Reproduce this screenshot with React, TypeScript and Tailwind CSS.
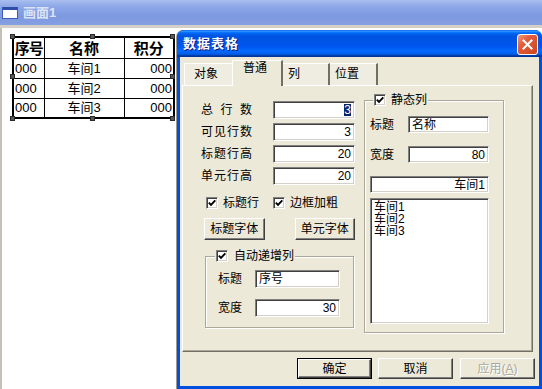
import React from "react";

function Check() {
  return (
    <span className="w-[12px] h-[12px] shrink-0 bg-white border border-t-[#808080] border-l-[#808080] border-b-white border-r-white shadow-[inset_1px_1px_0_#404040,inset_-1px_-1px_0_#d4d0c8] flex items-center justify-center">
      <svg width="8" height="8" viewBox="0 0 8 8">
        <path d="M0.8 3.6 L3 5.9 L7.3 1.4" stroke="#000" strokeWidth="1.9" fill="none" />
      </svg>
    </span>
  );
}

function Field({ className, value, left, selected }: { className: string; value?: string; left?: boolean; selected?: boolean }) {
  return (
    <div
      className={
        "bg-white border border-t-[#808080] border-l-[#808080] border-b-white border-r-white shadow-[inset_1px_1px_0_#404040,inset_-1px_-1px_0_#d4d0c8] flex items-center px-[3px] text-[12px] leading-[12px] text-black " +
        (left ? "justify-start " : "justify-end ") +
        className
      }
    >
      {selected ? <span className="bg-[#0a246a] text-white px-[0px]">{value}</span> : value}
    </div>
  );
}

function Btn({ children, className }: { children: React.ReactNode; className: string }) {
  return (
    <div
      className={
        "flex items-center justify-center bg-[#ece9d8] border border-t-white border-l-white border-b-[#404040] border-r-[#404040] shadow-[inset_-1px_-1px_0_#808080] text-[12px] leading-[12px] " +
        className
      }
    >
      {children}
    </div>
  );
}

function Handle({ className }: { className: string }) {
  return <div className={"absolute w-[5px] h-[5px] bg-[#5a5a5a] border border-[#2a2a2a] " + className} />;
}

export default function App() {
  return (
    <div className="relative w-[542px] h-[389px] overflow-hidden bg-white flex flex-col font-['Liberation_Sans','Noto_Sans_CJK_SC',sans-serif] text-black">
      {/* outer window title bar */}
      <div className="h-[25px] shrink-0 flex items-center bg-[linear-gradient(to_bottom,#aabef0_0%,#8ea8e8_25%,#7c98df_65%,#87a0e2_100%)]">
        <div className="ml-[2px] w-[16px] h-[12px] bg-white border border-[#3b5fb8] border-t-[3px] border-t-[#2d4fa8]" />
        <span className="ml-[5px] text-[13px] leading-[13px] font-bold text-[#dbe3f7]">画面1</span>
      </div>
      <div className="h-[3px] shrink-0 bg-[#d4d0c8]" />
      {/* canvas */}
      <div className="flex-1 border-l-[2px] border-[#c4c1b4] pl-[10px] pt-[8px]">
        <div className="relative w-[161px]">
          <table className="table-fixed border-collapse w-[161px] border-2 border-black">
            <colgroup>
              <col className="w-[31px]" />
              <col className="w-[80px]" />
              <col className="w-[50px]" />
            </colgroup>
            <tbody>
              <tr className="h-[21px]">
                <td className="border border-black p-0 text-center text-[15px] leading-[15px] font-bold font-['Noto_Sans_CJK_SC',sans-serif] whitespace-nowrap tracking-[-1px]">序号</td>
                <td className="border border-black p-0 text-center text-[15px] leading-[15px] font-bold font-['Noto_Sans_CJK_SC',sans-serif]">名称</td>
                <td className="border border-black p-0 text-center text-[15px] leading-[15px] font-bold font-['Noto_Sans_CJK_SC',sans-serif]">积分</td>
              </tr>
              {["车间1", "车间2", "车间3"].map((n) => (
                <tr key={n} className="h-[20px]">
                  <td className="border border-black p-0 pl-[1px] text-left text-[13px] leading-[13px]">000</td>
                  <td className="border border-black p-0 text-center text-[13px] leading-[13px]">{n}</td>
                  <td className="border border-black p-0 pr-[1px] text-right text-[13px] leading-[13px]">000</td>
                </tr>
              ))}
            </tbody>
          </table>
          <Handle className="left-[-2px] top-[-2px]" />
          <Handle className="left-[78px] top-[-2px]" />
          <Handle className="right-[-2px] top-[-2px]" />
          <Handle className="left-[-2px] top-[38px]" />
          <Handle className="right-[-2px] top-[38px]" />
          <Handle className="left-[-2px] bottom-[-2px]" />
          <Handle className="left-[78px] bottom-[-2px]" />
          <Handle className="right-[-2px] bottom-[-2px]" />
        </div>
      </div>

      {/* dialog window */}
      <div className="absolute left-[177px] top-[30px] w-[365px] h-[359px] flex flex-col rounded-t-[7px] bg-[#0050e0] shadow-[-1px_0_0_#9c9a90]">
        <div className="h-[27px] shrink-0 flex items-center justify-between pl-[6px] pr-[4px] rounded-t-[7px] bg-[linear-gradient(to_bottom,#0058ee_0%,#3593ff_4%,#288eff_6%,#127dff_8%,#036ffc_10%,#0262ee_14%,#0057e5_20%,#0054e3_24%,#0055eb_56%,#005bf5_66%,#026afe_76%,#0062ef_86%,#0052d6_92%,#0040ab_94%,#003092_100%)]">
          <span className="text-[13px] leading-[13px] font-bold text-white tracking-[1px] [text-shadow:1px_1px_0_#0a1883]">数据表格</span>
          <div className="w-[21px] h-[21px] mt-[2px] rounded-[3px] border border-white bg-[linear-gradient(to_bottom_right,#f09b7e_0%,#e35d3c_35%,#cc4620_100%)] flex items-center justify-center">
            <svg width="11" height="11" viewBox="0 0 11 11">
              <path d="M1.5 1.5 L9.5 9.5 M9.5 1.5 L1.5 9.5" stroke="#fff" strokeWidth="2" strokeLinecap="square" />
            </svg>
          </div>
        </div>
        <div className="mx-[3px] mb-[3px] flex-1 bg-[#ece9d8] flex flex-col text-[12px] leading-[12px]">
          {/* tabs */}
          <div className="pt-[3px] h-[28px] shrink-0 flex items-end pl-[4px] relative z-10">
            <div className="w-[48px] h-[22px] pl-[9px] pt-[4px] bg-[#efede2] border-t border-l border-white">对象</div>
            <div className="w-[51px] h-[26px] -mb-[1px] pl-[10px] pt-[1px] bg-[#ece9d8] border-t border-l border-white border-r-2 border-r-[#716f64]">普通</div>
            <div className="w-[47px] h-[22px] pl-[5px] pt-[4px] bg-[#efede2] border-t border-white border-r-2 border-r-[#716f64]">列</div>
            <div className="w-[48px] h-[22px] pl-[5px] pt-[4px] bg-[#efede2] border-t border-white border-r-2 border-r-[#716f64]">位置</div>
          </div>
          {/* panel */}
          <div className="ml-[2px] w-[351px] h-[267px] shrink-0 border border-t-white border-l-white border-r-[#716f64] border-b-[#716f64] shadow-[inset_-1px_-1px_0_#aca899] flex">
            {/* left column */}
            <div className="ml-[18px] w-[154px] flex flex-col">
              <div className="mt-[15px] flex flex-col gap-[4px]">
                <div className="h-[18px] flex items-center justify-between">
                  <div className="w-[51px] flex justify-between">
                    <span>总</span>
                    <span>行</span>
                    <span>数</span>
                  </div>
                  <Field className="w-[82px] h-[18px]" value="3" selected />
                </div>
                <div className="h-[18px] flex items-center justify-between">
                  <span className="tracking-[1px]">可见行数</span>
                  <Field className="w-[82px] h-[18px]" value="3" />
                </div>
                <div className="h-[18px] flex items-center justify-between">
                  <span className="tracking-[1px]">标题行高</span>
                  <Field className="w-[82px] h-[18px]" value="20" />
                </div>
                <div className="h-[18px] flex items-center justify-between">
                  <span className="tracking-[1px]">单元行高</span>
                  <Field className="w-[82px] h-[18px]" value="20" />
                </div>
              </div>
              <div className="mt-[12px] h-[12px] pl-[5px] flex items-center">
                <div className="w-[67px] flex items-center gap-[5px]">
                  <Check />
                  <span>标题行</span>
                </div>
                <div className="flex items-center gap-[5px]">
                  <Check />
                  <span>边框加粗</span>
                </div>
              </div>
              <div className="mt-[9px] pl-[3px] flex gap-[30px]">
                <Btn className="w-[61px] h-[22px]">标题字体</Btn>
                <Btn className="w-[61px] h-[22px]">单元字体</Btn>
              </div>
              <div className="mt-[16px] ml-[4px] w-[149px] h-[72px] relative border border-[#aca899] shadow-[1px_1px_0_#fff,inset_1px_1px_0_#fff] flex flex-col pl-[12px]">
                <div className="absolute left-[9px] top-[-7px] px-[1px] bg-[#ece9d8] flex items-center gap-[6px]">
                  <Check />
                  <span>自动递增列</span>
                </div>
                <div className="mt-[13px] h-[18px] flex items-center">
                  <span className="w-[37px]">标题</span>
                  <Field className="w-[85px] h-[18px]" value="序号" left />
                </div>
                <div className="mt-[11px] h-[18px] flex items-center">
                  <span className="w-[37px]">宽度</span>
                  <Field className="w-[85px] h-[18px]" value="30" />
                </div>
              </div>
            </div>
            {/* right group */}
            <div className="ml-[9px] mt-[14px] w-[140px] h-[233px] relative border border-[#aca899] shadow-[1px_1px_0_#fff,inset_1px_1px_0_#fff] flex flex-col pl-[5px]">
              <div className="absolute left-[8px] top-[-7px] px-[1px] bg-[#ece9d8] flex items-center gap-[5px]">
                <Check />
                <span>静态列</span>
              </div>
              <div className="mt-[15px] h-[17px] flex items-center">
                <span className="w-[38px]">标题</span>
                <Field className="w-[81px] h-[17px]" value="名称" left />
              </div>
              <div className="mt-[13px] h-[17px] flex items-center">
                <span className="w-[38px]">宽度</span>
                <Field className="w-[81px] h-[17px]" value="80" />
              </div>
              <Field className="mt-[13px] w-[119px] h-[17px]" value="车间1" />
              <div className="mt-[5px] w-[119px] h-[126px] bg-white border border-t-[#808080] border-l-[#808080] border-b-white border-r-white shadow-[inset_1px_1px_0_#404040,inset_-1px_-1px_0_#d4d0c8] pl-[3px] pt-[2px] leading-[12px]">
                <div>车间1</div>
                <div>车间2</div>
                <div>车间3</div>
              </div>
            </div>
          </div>
          {/* buttons */}
          <div className="mt-[6px] flex justify-end pr-[4px]">
            <div className="border border-black">
              <Btn className="w-[73px] h-[19px]">确定</Btn>
            </div>
            <Btn className="ml-[6px] w-[75px] h-[21px]">取消</Btn>
            <Btn className="ml-[7px] w-[75px] h-[21px] text-[#aca899] [text-shadow:1px_1px_0_#fff]">
              应用(<span className="underline">A</span>)
            </Btn>
          </div>
        </div>
      </div>
    </div>
  );
}
